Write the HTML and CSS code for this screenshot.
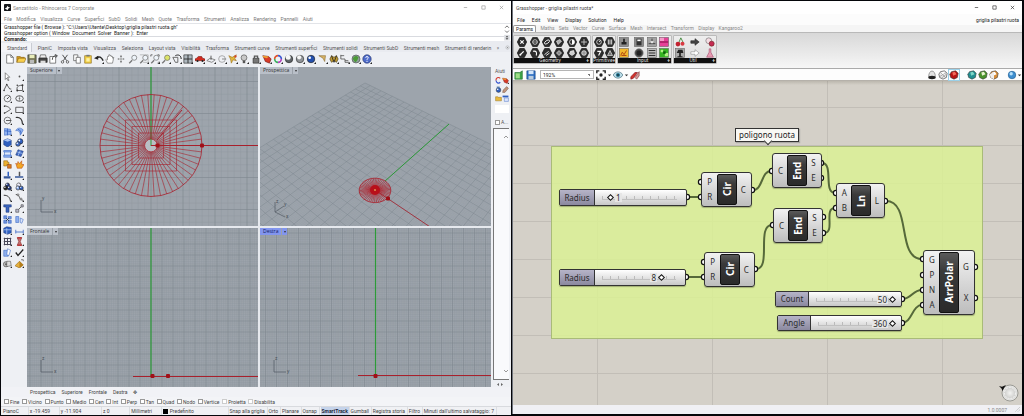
FILE: index.html
```html
<!DOCTYPE html>
<html lang="it">
<head>
<meta charset="utf-8">
<title>Rhinoceros e Grasshopper</title>
<link rel="stylesheet" href="styles.css">
</head>
<body>
<section class="window rhino">
  <header class="titlebar">
    <svg class="app-icon" viewBox="0 0 8 8"><rect width="8" height="8" rx="1" fill="#16181c"/><path d="M1 5l2-1 1-2 1 1.500 2 .5-2 1-1 2-1.500-1z" fill="#fff"/></svg>
    <span class="title">Senzatitolo - Rhinoceros 7 Corporate</span>
    <div class="controls" data-controls></div>
  </header>
  <nav class="menu">
    <button>File</button><button>Modifica</button><button>Visualizza</button><button>Curve</button><button>Superfici</button><button>SubD</button><button>Solidi</button><button>Mesh</button><button>Quote</button><button>Trasforma</button><button>Strumenti</button><button>Analizza</button><button>Rendering</button><button>Pannelli</button><button>Aiuti</button>
  </nav>
  <div class="command">
    <div class="command-text">
      <p>Grasshopper file ( Browse ): "C:\Users\Utente\Desktop\griglia pilastri ruota.gh"</p>
      <p>Grasshopper option ( Window&nbsp; Document&nbsp; Solver&nbsp; Banner ):&nbsp; Enter</p>
      <div class="prompt"><label for="cmd">Comando:</label><input id="cmd" type="text"></div>
    </div>
    <svg class="command-scroll" viewBox="0 0 6 18"><path d="M1 4l2-2 2 2M1 7l2 2 2-2" fill="none" stroke="#444" stroke-width=".8"/><rect y="11.500" width="6" height="6" fill="#dcdee2"/><path d="M1.500 14l1.500-1.500 1.500 1.500zM1.500 15.200l1.500 1.500 1.500-1.500z" fill="#444"/></svg>
  </div>
  <nav class="tabs">
    <button class="active">Standard</button><button>PianiC</button><button>Imposta vista</button><button>Visualizza</button><button>Seleziona</button><button>Layout vista</button><button>Visibilità</button><button>Trasforma</button><button>Strumenti curve</button><button>Strumenti superfici</button><button>Strumenti solidi</button><button>Strumenti SubD</button><button>Strumenti mesh</button><button>Strumenti di renderin</button><button aria-label="Altre schede">»</button><button aria-label="Opzioni" data-icons="gear"></button>
  </nav>
  <div class="toolbar" data-tools="new open save print export cut copy paste undo hand orbit zoom zoomwin zoomext zoomsel rotview quad car cplane circle plug bulb lock layers wheel sphereW sphereG sphereB cone net dims earth help"></div>
  <div class="work">
    <aside class="palette" data-tools="pointer point poly rectpts circ ellipse arc rect circ2 curve surf surf2 box spheres cyl sheet puzzle burst trim split darkballs balls fillet blend text array blocks mirror cage dim grid3 hourglass copyb check roll pyramid"></aside>
    <main class="viewports">
      <article class="viewport"><svg id="top" viewBox="27 67 231 159" preserveAspectRatio="xMidYMid slice"></svg><button class="view-label">Superiore<i></i></button></article>
      <article class="viewport"><svg id="persp" viewBox="260 67 231 159" preserveAspectRatio="xMidYMid slice"></svg><button class="view-label">Prospettica<i></i></button></article>
      <article class="viewport"><svg id="front" viewBox="27 228 231 159" preserveAspectRatio="xMidYMid slice"></svg><button class="view-label">Frontale<i></i></button></article>
      <article class="viewport"><svg id="right" viewBox="260 228 231 159" preserveAspectRatio="xMidYMid slice"></svg><button class="view-label current">Destra<i></i></button></article>
    </main>
    <aside class="panel">
      <h2>Aiuti</h2>
      <div class="panel-icons" data-tools="wheelC layers ballB brush folder docs"></div>
      <input type="text" aria-label="Cerca">
      <label class="auto"><input type="checkbox">A...</label>
      <div class="scroller"><svg viewBox="0 0 6 4"><path d="M1 3l2-2 2 2"/></svg><svg viewBox="0 0 6 4"><path d="M1 1l2 2 2-2"/></svg></div>
      <svg class="hscroll" viewBox="0 0 12 5"><path d="M4 1v3L2 2.500zM6 1v3l2-1.500z" fill="#666"/></svg>
    </aside>
  </div>
  <nav class="view-tabs"><button>Prospettica</button><button>Superiore</button><button>Frontale</button><button>Destra</button><button aria-label="Nuova vista">✥</button></nav>
  <form class="snaps">
    <label><input type="checkbox">Fine</label><label><input type="checkbox">Vicino</label><label><input type="checkbox">Punto</label><label><input type="checkbox">Medio</label><label><input type="checkbox">Cen</label><label><input type="checkbox">Int</label><label><input type="checkbox">Perp</label><label><input type="checkbox">Tan</label><label><input type="checkbox">Quad</label><label><input type="checkbox">Nodo</label><label><input type="checkbox">Vertice</label><label class="soft"><input type="checkbox">Proietta</label><label class="soft"><input type="checkbox">Disabilita</label>
  </form>
  <footer class="status">
    <span>PianoC</span><span>x -19.459</span><span class="wide">y -11.904</span><span class="wide">z 0</span><span>Millimetri</span><span class="layer"><i></i>Predefinito</span><button>Snap alla griglia</button><button>Orto</button><button>Planare</button><button>Osnap</button><button class="on">SmartTrack</button><button>Gumball</button><button>Registra storia</button><button>Filtro</button><span>Minuti dall'ultimo salvataggio: 7</span>
  </footer>
</section>

<section class="window hopper">
  <header class="titlebar">
    <span class="title">Grasshopper - griglia pilastri ruota*</span>
    <div class="controls" data-controls></div>
  </header>
  <nav class="menu"><button>File</button><button>Edit</button><button>View</button><button>Display</button><button>Solution</button><button>Help</button><span class="doc">griglia pilastri ruota</span></nav>
  <nav class="tabs"><button class="active">Params</button><button>Maths</button><button>Sets</button><button>Vector</button><button>Curve</button><button>Surface</button><button>Mesh</button><button>Intersect</button><button>Transform</button><button>Display</button><button>Kangaroo2</button></nav>
  <div class="ribbon">
    <div class="group geometry"><div class="cells" data-tools="hx hring hcrv hbox hhalf hplus hslash hcone hpipe hdiam hgem hball"></div><h3><span>Geometry</span><b>+</b></h3></div>
    <div class="group primitive"><div class="cells" data-tools="hclock hbars hseven htri"></div><h3><span>Primitive</span><b>+</b></h3></div>
    <div class="group input"><div class="cells" data-tools="toggle panelw slid swatchP graph knob list swatchG"></div><h3><span>Input</span><b>+</b></h3></div>
    <div class="group util"><div class="cells" data-tools="cherry arrowD gems tree arrowL flask"></div><h3><span>Util</span><b>+</b></h3></div>
  </div>
  <div class="canvas-bar">
    <div class="left-tools" data-tools="ghopen ghsave"></div>
    <select aria-label="Zoom"><option>192%</option></select>
    <div class="mid-tools" data-tools="target caret eye caret sketch"></div>
    <div class="right-tools" data-tools="hat mesh0 gemR"></div>
    <div class="right-tools" data-tools="gemT gemG gemO"></div>
    <div class="right-tools end" data-tools="gemB caret"></div>
  </div>
  <div class="canvas">
    <div class="gh-group"></div>
    <svg class="wires" width="510" height="324" viewBox="513 81 510 324" id="wires"></svg>
    <div class="note">poligono ruota</div>
    <div class="slider s1"><label for="r1">Radius</label><div class="track"><input id="r1" type="range" min="0" max="100" value="12"><output>1</output></div></div>
    <div class="slider s2"><label for="r2">Radius</label><div class="track"><input id="r2" type="range" min="0" max="100" value="80"><output>8</output></div></div>
    <div class="slider s3"><label for="r3">Count</label><div class="track"><input id="r3" type="range" min="0" max="100" value="100"><output>50</output></div></div>
    <div class="slider s4"><label for="r4">Angle</label><div class="track"><input id="r4" type="range" min="0" max="100" value="100"><output>360</output></div></div>
    <div class="node cir1"><div><span>P</span><span>R</span></div><strong>Cir</strong><div><span>C</span></div></div>
    <div class="node cir2"><div><span>P</span><span>R</span></div><strong>Cir</strong><div><span>C</span></div></div>
    <div class="node end1"><div><span>C</span></div><strong>End</strong><div><span>S</span><span>E</span></div></div>
    <div class="node end2"><div><span>C</span></div><strong>End</strong><div><span>S</span><span>E</span></div></div>
    <div class="node ln"><div><span>A</span><span>B</span></div><strong>Ln</strong><div><span>L</span></div></div>
    <div class="node arr"><div><span>G</span><span>P</span><span>N</span><span>A</span></div><strong>ArrPolar</strong><div><span>G</span><span>X</span></div></div>
    <svg class="compass" viewBox="0 0 20 18"><defs><radialGradient id="cg"><stop offset="0" stop-color="#f4f4f2"/><stop offset=".65" stop-color="#d0d0ce"/><stop offset="1" stop-color="#f2f2f0"/></radialGradient></defs><circle cx="11" cy="9" r="8" fill="url(#cg)" stroke="#85857f" stroke-width=".8"/><circle cx="11" cy="9" r="5.500" fill="none" stroke="#fff" stroke-width=".7" stroke-dasharray="2 1"/><path d="M0 2l3 .8L7 1 5 4 3.500 7 2.500 4.500z" fill="#111"/></svg>
  </div>
  <footer class="gh-status"><span>1.0.0007</span><svg viewBox="0 0 5 5"><path d="M5 0L0 5M5 2.500L2.500 5" stroke="#aaa" stroke-width=".7" stroke-dasharray="1 .6"/></svg></footer>
</section>
<script src="app.js"></script>
</body>
</html>
```
FILE: styles.css
```css
* { box-sizing: border-box; }
body {
  margin: 0;
  padding: 1px 2px 1px 1px;
  height: 100vh;
  background: #05060a;
  display: grid;
  grid-template-columns: 1fr 1fr;
  gap: 1px;
  font-family: Roboto, "Liberation Sans", sans-serif;
  font-size: 5px;
  line-height: 6px;
  color: #555;
}
button, input, select, output { font: inherit; color: inherit; margin: 0; }
button { border: 0; padding: 0; background: none; white-space: nowrap; }
p, h2, h3 { margin: 0; font-size: inherit; font-weight: normal; }
svg { display: block; }
.window { display: flex; flex-direction: column; min-width: 0; overflow: hidden; background: #fff; }

.titlebar { height: 13px; flex: none; display: flex; align-items: center; gap: 2px; padding-left: 3px; }
.app-icon { width: 7px; height: 7px; }
.title { white-space: nowrap; color: #858585; }
.controls { margin-left: auto; display: flex; gap: 13px; padding-right: 7px; }
.controls svg { width: 5px; height: 5px; }
.menu { display: flex; align-items: center; flex: none; }
.tabs { display: flex; flex: none; }
[data-tools] button { display: grid; place-items: center; min-width: 0; }

/* modelling window */
.rhino .menu { height: 9px; padding: 0 198px 0 3px; justify-content: space-between; color: #777; }
.command { flex: none; display: flex; border-top: 1px solid #e2e4e8; height: 18px; color: #222; }
.command-text { flex: 1; padding-left: 3px; white-space: nowrap; }
.command-text p { height: 6px; }
.prompt { display: flex; height: 5px; line-height: 5px; font-weight: bold; border-top: 1px solid #d9dbe0; }
.prompt input { flex: 1; border: 0; padding: 0; height: 4px; outline: 0; background: none; }
.command-scroll { width: 6px; height: 17px; margin-right: 1px; }
.rhino .tabs { height: 11px; padding: 2px 1px 0 0; background: #e9ebf0; justify-content: space-between; align-items: stretch; color: #555; }
.rhino .tabs .active { background: #f3f4f8; padding: 0 4px 0 6px; border-right: 1px solid #c9ccd3; }
.rhino .tabs svg { width: 5px; height: 5px; }
.toolbar { flex: none; height: 15px; padding: 0 138px 2px 3px; background: #eef0f4; display: grid; grid-auto-flow: column; grid-auto-columns: 1fr; }
.toolbar svg { width: 10px; height: 10px; }
.work { flex: 1; min-height: 0; display: flex; background: #eef0f4; }
.palette { flex: none; width: 26px; padding: 4px 2px 0 0; display: grid; grid-template-columns: 1fr 1fr; grid-auto-rows: 11px; align-content: start; }
.palette svg { width: 9px; height: 9px; }
.viewports { flex: 1; min-width: 0; display: grid; grid-template-columns: 1fr 1fr; grid-template-rows: 1fr 1fr; gap: 2px; background: #e6e9ee; }
.viewport { position: relative; min-width: 0; min-height: 0; overflow: hidden; background: #9da4ac; }
.viewport > svg { width: 100%; height: 100%; }
.view-label { position: absolute; left: 0; top: 0; height: 7px; padding-left: 3px; background: #b9bfc8; color: #333; display: flex; align-items: center; gap: 3px; line-height: 7px; font-family: "Open Sans", sans-serif; }
.view-label i { height: 7px; width: 6px; border-left: 1px solid #9ba2aa; display: grid; place-items: center; }
.view-label i::before { content: ""; border: 1px solid transparent; border-top: 2px solid #333; border-bottom: 0; }
.view-label.current { background: #8295ee; color: #101a60; }
.panel { flex: none; width: 20px; padding: 1px 2px 0 4px; display: flex; flex-direction: column; gap: 2px; }
.panel-icons { display: grid; grid-template-columns: 1fr 1fr; grid-auto-rows: 9px; }
.panel-icons svg { width: 7px; height: 7px; }
.panel > input { width: 100%; height: 8px; border: 0; padding: 0; background: #fff; }
.auto { display: flex; align-items: center; gap: 1px; margin-top: 4px; }
input[type=checkbox] { appearance: none; width: 5px; height: 5px; flex: none; border: 1px solid #999; background: #fff; }
.scroller { flex: 1; margin: 1px 0 0 -2px; background: #f9fafc; border: 1px solid #777; border-right: 0; display: flex; flex-direction: column; justify-content: space-between; align-items: flex-end; padding: 6px 0; }
.scroller svg { width: 6px; height: 4px; fill: none; stroke: #999; }
.hscroll { width: 12px; height: 5px; }
.view-tabs { flex: none; height: 10px; padding-left: 29px; display: flex; align-items: center; gap: 6px; background: #f1f2f6; color: #444; }
.snaps { flex: none; height: 9px; padding: 0 236px 0 3px; display: flex; align-items: center; justify-content: space-between; background: #f3f4f7; color: #444; }
.snaps label { display: flex; align-items: center; gap: 1px; }
.snaps .soft input { border-color: #ccc; }
.status { flex: none; height: 9px; padding: 0 14px 0 2px; display: flex; align-items: stretch; justify-content: space-between; background: #f0f1f4; border-top: 1px solid #d8dade; color: #444; line-height: 8px; white-space: nowrap; }
.status > * { border-right: 1px solid #dcdee2; padding: 0 2px 0 0; }
.status > :nth-child(-n+5) { padding-right: 9px; }
.status > .wide { padding-right: 20px; }
.status .on { background: #c5d3ea; color: #1c2740; font-weight: bold; padding: 0 1px; }
.layer { display: flex; align-items: center; gap: 2px; }
.status .layer { padding-right: 34px; }
.layer i { width: 5px; height: 5px; background: #000; }

/* node editor window */
.hopper { border-left: 1px solid #70747c; margin-bottom: 1px; }
.hopper .title { color: #444; }
.hopper .menu { height: 11px; gap: 7px; padding: 0 3px 0 4px; color: #222; background: #fcfcfc; }
.doc { margin-left: auto; }
.hopper .tabs { height: 8px; padding: 0 279px 0 0; justify-content: space-between; background: #f5f5f5; color: #888; border-bottom: 1px solid #b9b9b9; line-height: 7px; }
.hopper .tabs .active { background: #fff; color: #222; border: 1px solid #999; border-bottom: 0; padding: 0 2px; line-height: 6px; border-radius: 2px 2px 0 0; }
.ribbon { flex: none; height: 36px; padding: 2px 0 4px; display: flex; gap: 1px; background: linear-gradient(#d8d8d8, #f6f6f6); border-bottom: 1px solid #aaa; }
.group { display: flex; flex-direction: column; border: 1px solid #bbb; background: linear-gradient(#eee, #dcdcdc); border-radius: 1px; }
.group h3 { height: 5px; line-height: 5px; background: #111; color: #ddd; display: flex; padding-right: 1px; }
.group h3 span { flex: 1; text-align: center; }
.cells { flex: 1; display: grid; grid-template-rows: 1fr 1fr; }
.cells svg { width: 10px; height: 10px; }
.geometry { width: 78px; }
.geometry .cells { grid-template-columns: 15px 12px 11px 14px 12px 12px; }
.primitive { width: 24px; }
.primitive .cells { grid-template-columns: 1fr 1fr; }
.input { width: 55px; }
.input .cells { grid-template-columns: 12px 17px 9px 16px; }
.util { width: 44px; }
.util .cells { grid-template-columns: 12px 17px 13px; }
.canvas-bar { flex: none; height: 12px; display: flex; align-items: center; background: #fdfdfd; border-bottom: 1px solid #b5b1aa; }
.canvas-bar [data-tools] { display: flex; align-items: center; }
.canvas-bar svg { width: 10px; height: 10px; }
.left-tools { gap: 2px; padding-left: 1px; }
.canvas-bar select { appearance: none; width: 54px; height: 9px; margin: 0 2px 0 4px; padding: 0 2px; border: 1px solid #b5b5b5; background: linear-gradient(45deg, transparent 50%, #777 50%) 47px 3px / 2px 2px no-repeat, #fff; border-radius: 0; color: #222; line-height: 6px; }
.mid-tools { margin-right: auto; gap: 1px; }
.canvas-bar .i-caret svg { width: 5px; }
.right-tools { gap: 1px; padding-right: 8px; }
.right-tools.end { gap: 0; padding-right: 0; }
.i-gemR { outline: 1px solid #9ad0e8; }
.canvas {
  flex: 1; position: relative; overflow: hidden;
  background:
    linear-gradient(rgba(90, 85, 70, .2), transparent 4px),
    repeating-linear-gradient(90deg, transparent 0 84px, #c2beb7 84px 85px, transparent 85px 115px),
    repeating-linear-gradient(transparent 0 26px, #c2beb7 26px 27px, transparent 27px 38px),
    #d4d0c8;
}
.gh-group { position: absolute; left: 38px; top: 65px; width: 432px; height: 193px; background: rgba(219, 242, 148, .83); border: 1px solid #a9bb78; }
.wires { position: absolute; left: 0; top: 0; }
.note { position: absolute; left: 222px; top: 47px; height: 14px; padding: 0 3px; border: 1px solid #333; background: #f8f8f4; color: #222; font: 8px/11px "Noto Sans", sans-serif; white-space: nowrap; box-shadow: 1px 1px 1px #8888; }
.note::after { content: ""; position: absolute; left: 29px; top: 9px; width: 5px; height: 5px; background: #f8f8f4; border: solid #333; border-width: 0 1px 1px 0; transform: rotate(45deg); }
.slider { position: absolute; width: 127px; height: 17px; display: flex; border: 1px solid #333; border-radius: 2px; overflow: hidden; background: linear-gradient(#fff, #c8c8c8); color: #2b2b2b; font: 8px/15px "Noto Sans", sans-serif; box-shadow: 0 1px 1px #0004; }
.slider label { width: 35px; text-align: center; border-right: 1px solid #333; background: linear-gradient(#b6b4c8, #8b899f); }
.track { flex: 1; position: relative; display: flex; align-items: center; padding: 0 6px 0 4px; }
.track input { appearance: none; width: 100%; height: 9px; background: linear-gradient(#c0c0c0, #c0c0c0), repeating-linear-gradient(90deg, #bbb 0 1px, transparent 1px 8px); background-size: calc(100% - 6px) 1px, calc(100% - 6px) 4px; background-position: 3px 6px, 3px 3px; background-repeat: no-repeat; }
.track input::-webkit-slider-thumb { appearance: none; width: 5px; height: 5px; border: 1px solid #111; background: #fff; transform: rotate(45deg); }
.track output { position: absolute; padding: 0 1px; background: #e6e6e6; line-height: 9px; }
.s1 { left: 46px; top: 108px; width: 128px; }
.s1 output { left: 20px; }
.s2 { left: 46px; top: 188px; }
.s2 output { right: 28px; }
.s3 { left: 262px; top: 210px; height: 16px; line-height: 14px; }
.s3 label, .s4 label { width: 33px; }
.s3 output, .s4 output { right: 13px; }
.s4 { left: 264px; top: 234px; width: 125px; height: 16px; line-height: 14px; }
.node { position: absolute; width: 51px; height: 35px; display: grid; grid-template-columns: 1fr 20px 1fr; padding: 1px; border: 1px solid #333; border-radius: 3px; background: linear-gradient(#f2f2f2, #bdbdbd); color: #2b2b2b; font: 8px/10px "Noto Sans", sans-serif; box-shadow: 0 1px 1px #0004; }
.node > div { display: flex; flex-direction: column; justify-content: space-around; align-items: center; }
.node strong { display: grid; place-items: center; writing-mode: vertical-rl; transform: rotate(180deg); border: 1px solid #111; border-radius: 2px; background: linear-gradient(0deg, #5a5a5a, #3a3a3a 30%, #2a2a2a); color: #fff; font-size: 10px; line-height: 18px; }
.cir1 { left: 188px; top: 91px; }
.cir2 { left: 191px; top: 171px; }
.end1 { left: 259px; top: 72px; width: 50px; }
.end2 { left: 260px; top: 127px; width: 50px; }
.ln { left: 323px; top: 102px; width: 49px; }
.arr { left: 410px; top: 169px; width: 52px; height: 65px; }
.compass { position: absolute; right: 3px; bottom: 3px; width: 20px; height: 18px; }
.gh-status { flex: none; height: 9px; padding-right: 2px; display: flex; align-items: center; justify-content: flex-end; gap: 8px; background: #f0f0f4; color: #888; }
.gh-status svg { width: 5px; height: 5px; }
```
FILE: app.js
```js
const K = '#333', B = '#2f5fc0', L = '#8fb0ee', G = '#888';
const line = (d, c = K, w = 1) => `<path d="${d}" fill="none" stroke="${c}" stroke-width="${w}"/>`;
const fill = (d, c, s = 'none') => `<path d="${d}" fill="${c}" stroke="${s}" stroke-width=".7"/>`;
const disc = (x, y, r, c, s = 'none', w = .8) => `<circle cx="${x}" cy="${y}" r="${r}" fill="${c}" stroke="${s}" stroke-width="${w}"/>`;
const ball = (x, y, r, c) => disc(x, y, r, c, '#222') + disc(x - r * .35, y - r * .35, r * .35, '#fff');
const corner = fill('M12 9.500V12H9.500z', '#222');
const hex = g => fill('M3.200 .6h5.600L11.600 6 8.800 11.400H3.200L.4 6z', '#2d2d2d', '#000') + g;
const key = (c, g) => `<rect x=".5" y=".5" width="11" height="11" fill="${c}" stroke="#666" stroke-width=".7"/>` + g;
const W = '#fff';
const gem = (a, b) => fill('M3 2l5-1 3 3-1 5-4 2-4-2-1-4z', a, '#333') + fill('M4 3l3-1 2 3-4 2z', b);
const lens = line('M5 7.500L1.500 11', '#777', 1.6) + disc(7.5, 4.5, 3, '#eef4fa', '#666');

const icons = {
  new: fill('M2 1h5l3 3v7H2z', '#fff', K) + line('M7 1v3h3', K, .7),
  open: fill('M1 10V3h4l1 1h4v2', '#d89a20', '#84600c') + fill('M1 10l2-5h9l-2 5z', '#f8cf4c', '#84600c'),
  save: fill('M1 1h10v10H1z', '#737352', '#333') + fill('M3 1h6v4H3z', '#e8edba') + fill('M3.500 7h5v4h-5z', '#bbb'),
  print: fill('M3 1h6l1 4H2z', '#eee', K) + fill('M1 5h10v5H1z', '#454545', '#111') + fill('M3 8h6v3H3z', '#ddd'),
  export: fill('M1 3h7v8H1z', '#fff', K) + line('M4 7c0-4 2-5 5-5M7 .5L10 2 8 4.500'),
  cut: line('M3 1l5 7M9 1L4 8') + disc(3, 9.5, 1.5, 'none', K) + disc(9, 9.5, 1.5, 'none', K),
  copy: fill('M2 1h5v7H2z', '#fff', K) + fill('M5 4h5v7H5z', '#fff', K),
  paste: fill('M2 2h8v9H2z', '#f1cf46', '#876414') + fill('M4 1h4v2H4z', '#777') + fill('M4 5h4v4H4z', '#fff2a4'),
  undo: line('M3 5c3-3 6-1 8 3', '#222', 1.7) + fill('M0 5l5-3v5z', '#222') + corner,
  hand: fill('M3 11L1 7l1-1 1 1V3h1.500V1H6v1h1.500v1H9v2l1.500-1L9 11z', '#fff', '#555'),
  orbit: line('M6 2v8M3 6h6', '#888', .8) + fill('M5 3.500L6 1l1 2.500zM5 8.500L6 11l1-2.500zM3.500 5L1.500 6l2 1zM8.500 5l2 1-2 1z', '#666'),
  zoom: lens, zoomwin: lens + line('M1 1h10v9H5', '#999', .7) + corner,
  zoomext: lens + line('M1 3V1h2M9 1h2v2M11 9v2H9', '#555') + corner,
  zoomsel: line('M5 7.500L1.500 11', '#777', 1.6) + disc(7.5, 4.5, 3.2, '#dce469', '#666') + corner,
  rotview: line('M1 4h6v6H4z', '#555') + line('M4 2c4-2 7 0 7 4', '#222', 1.2) + corner,
  quad: fill('M1 1h10v10H1z', '#aeb8bf', '#222') + line('M6 1v10M1 6h10', '#222') + corner,
  car: fill('M0 8V6l2-1 2-2h4l1 2 3 1v2z', '#d12b20', '#741410') + disc(3, 8.5, 1.2, '#222') + disc(9, 8.5, 1.2, '#222') + corner,
  cplane: line('M1 8l4-3 6 2-4 3z', '#777') + line('M6 7V2', '#444') + corner,
  circle: disc(6, 6, 4, 'none', '#888') + line('M6 6h5', '#777') + corner,
  plug: fill('M1 2l4 2 5-3-2 4 2 3-4-1-2 4-1-5z', '#e2b73c', '#99701c') + disc(9, 3, 1.4, '#d0422c') + corner,
  bulb: disc(6, 4.5, 3.5, '#c9c9c9', '#555') + fill('M4.500 8h3v3h-3z', '#555') + corner,
  lock: line('M4 5V2.500h4V5', '#555', 1.3) + fill('M2.500 5h7v6h-7z', '#777', '#222') + corner,
  layers: fill('M1 2l7 1 3 3-2 5-5-2z', '#d83b28', '#671818') + fill('M1 2l7 1-2 2-5-1z', '#f0a336') + corner,
  wheel: line('M6 2a4 4 0 0 1 4 4', '#3d58d0', 2) + line('M10 6a4 4 0 0 1-4 4', '#b342bc', 2) + line('M6 10a4 4 0 0 1-4-4', '#3cae61', 2) + line('M2 6a4 4 0 0 1 4-4', '#e0532c', 2) + corner,
  wheelC: line('M9 2.500A4 4 0 0 0 2 6', '#d64237', 2) + line('M2 6a4 4 0 0 0 7 3', '#3656d0', 2),
  sphereW: disc(6, 6, 4.5, '#5f6468', '#222') + disc(5, 4, 3, '#f6f6f6'),
  sphereG: disc(6, 6, 4.5, '#909498', '#333') + disc(5, 4, 2.5, '#f6f6f6') + corner,
  sphereB: ball(6, 6, 4.5, '#2350ae') + corner, ballB: ball(6, 7, 4, B) + fill('M3 1h5v3H3z', '#5478aa'),
  cone: fill('M1 2h8L8 9 6 5z', '#d7b365', '#896b31') + corner,
  net: fill('M1 6l2-4 3 2 3-2 2 4-2 4-3-2-3 2z', '#bf9a32', '#3f3310') + line('M3 2l3 8M9 2L6 10', '#222') + corner,
  dims: line('M1 1v5h5v4h5M1 2h4M6 8h4', '#555') + corner,
  earth: disc(6, 6, 4.8, '#8fa19d', '#555') + fill('M2 6c2-5 5-4 7-2-1 3-2 5-4 6z', '#4c9a37') + corner,
  help: disc(6, 6, 5, '#4e6ccc', '#23346b') + line('M4.500 4.500c0-2 3-2 3 0 0 1-1.500 1-1.500 2.500M6 8.200v1.300', W, 1.2) + corner,
  gear: disc(6, 6, 4, 'none', '#888') + disc(6, 6, 1.5, '#888'),

  pointer: fill('M3 1l6 6H6l2 4-1.500.5L5 8l-2 2z', '#fff', K),
  point: disc(6, 6, 1.2, '#555') + corner,
  poly: line('M1 10l4-8 4 6 2 0') + disc(5, 2, 1, K) + disc(1.5, 10, 1, K) + corner,
  rectpts: line('M3 10c-1-4 0-7 7-7M3 10h7V3') + disc(3, 3, 1, K) + disc(10, 3, 1.2, K) + disc(3, 10, 1.2, K) + corner,
  circ: disc(6, 6, 4.5, 'none', K) + line('M6 6l3-3') + disc(6, 6, .8, K) + corner,
  ellipse: `<ellipse cx="6" cy="6" rx="5" ry="3.700" fill="none" stroke="#333"/>` + disc(6, 6, 1, K) + line('M6 2v8', G) + corner,
  arc: line('M2 1c6 1 8 4 8 5L2 11') + disc(2, 1.5, 1, K) + disc(2, 10.5, 1, K) + corner,
  rect: line('M1 3h10v7H1z') + corner,
  circ2: disc(6, 6, 4.5, 'none', K) + line('M4 6h7') + corner,
  curve: line('M1 2c6-1 9 3 9 9', K, 1.5) + corner,
  surf: fill('M2 2l8 1 1 7-9 1z', L, B) + line('M2 5l9 1M6 2v9', B) + corner,
  surf2: fill('M1 5c2-5 8-4 10-1L7 11C7 6 4 4 1 5z', L, B) + line('M4 3c3 1 4 3 4 6', B) + corner,
  box: fill('M1 3l5-2 5 2v6l-5 3-5-3z', B, '#1c3674') + fill('M1 3l5-2 5 2-5 2z', '#a8c3f5') + corner,
  spheres: ball(7, 4.5, 3.5, B) + ball(4, 8, 3, '#4772cb') + corner,
  cyl: fill('M2 3h8v6H2z', '#e0e9fa', B) + fill('M1 2h10v2H1zM1 8h10v3H1z', L, B) + corner,
  sheet: fill('M4 1l7 2-3 7-7-2z', '#3e68c2', '#1c3674') + line('M3 4l7 2M7 2L4 9', '#b6cdf5') + corner,
  puzzle: fill('M1 1h5v2h2v3H5v2H1z', '#edb12f', '#8a5d10') + fill('M6 6h5v5H6z', '#d9781e', '#8a3d10'),
  burst: fill('M1 4l2 2 1-4 2 3 3-4v5h3l-3 5H3z', '#f2a724', '#b84512'),
  trim: line('M7 1v6', B, 2) + fill('M1 7h9v3H1z', '#36579a') + corner,
  split: line('M6 1v6', '#555', 2) + fill('M0 7h11v2H0z', '#36579a') + corner,
  darkballs: ball(6, 4, 2.7, '#243a80') + ball(3.5, 8, 2.7, '#222') + ball(8.5, 8, 2.7, '#243a80') + corner,
  balls: ball(5, 4, 2.7, '#dde') + ball(4, 8, 2.7, L) + ball(8.5, 8, 2.5, B) + corner,
  fillet: line('M1 3c5 0 8 2 9 8', K, 1.3) + corner,
  blend: line('M1 2c3 0 4 1 5 4s3 3 5 4') + disc(4, 2.5, 1.3, '#fff', K) + disc(8, 8, 1.3, '#fff', K) + corner,
  text: fill('M1 1h10v3H8v7H4V4H1z', '#3a64be', '#1c3674') + corner,
  array: fill('M1 7h4v4H1zM8 1h3v3H8z', '#bbc', K) + line('M5 7l3-3') + corner,
  blocks: fill('M1 1h4v4H1zM7 2h4v3H7zM1 7h4v4H1zM7 7h4v4H7z', '#6f91dc', B) + line('M4 4l4 4M8 4L4 8', '#234'),
  mirror: fill('M1 2h4v8H1z', L, B) + fill('M7 4l4 2-2 5-2-1z', '#dde6fa', B),
  cage: fill('M1 3l4-2 6 1v7l-5 2-5-2z', B, '#1c3674') + line('M1 5h10M5 3v8', '#b6cdf5') + corner,
  dim: line('M1 5v5M11 5v5M1 8h10', B) + corner,
  grid3: line('M1 2h10M1 6h10M1 10h10M2 1v10M6 1v10M10 1v10', '#445', 1.3) + corner,
  hourglass: fill('M3 1h6L7 6l2 5H3l2-5z', '#c76f6f', '#7b2020') + line('M3 1h6M3 11h6', '#b91f1f', 1.5) + corner,
  copyb: fill('M1 3h6v8H1z', L, B) + fill('M6 1l4 2-2 7-3-1z', '#fff', B) + corner,
  check: line('M1 6l3 4 7-8', '#222', 1.7) + corner,
  roll: disc(4, 7, 3.5, '#bbb', '#444') + fill('M5 3h5l1 6-6 1z', '#ddd', '#444') + disc(4, 7, 1.2, '#555') + corner,
  pyramid: fill('M0 9l6-6 5 5-5 4z', '#e5b03c', '#825b12') + fill('M6 3l5 5-5 4z', '#b47d1b') + line('M8 1h3v2', '#555') + corner,
  brush: fill('M8 1l3 3-6 7-4 0 1-4z', '#c0947c', '#5e4030'), folder: fill('M1 3h4l1 1h5v6H1z', '#e9b93d', '#84600c'),
  docs: fill('M1 1h10v3H1z', B) + fill('M4 5h7v6H4z', '#dbe4fa', B),

  hx: hex(line('M4 4l4 4M8 4L4 8', W, 1.4)), hring: hex(disc(6, 6, 2.8, 'none', W) + line('M3 6h6', W, .6)),
  hcrv: hex(`<ellipse cx="6" cy="6" rx="3.500" ry="1.700" fill="none" stroke="#fff" transform="rotate(-35 6 6)"/>`),
  hbox: hex(fill('M3 5l4-2 2 2-4 4z', '#aaa', W)), hhalf: hex(disc(6, 6, 3, 'none', W) + fill('M6 3a3 3 0 0 1 0 6z', W)),
  hplus: hex(line('M6 2.500v7M2.500 6h7', '#bbb', 1.2)), hslash: hex(line('M4 8l4-4', W, 1.5) + disc(4, 8, 1.2, W)),
  hcone: hex(line('M3.500 4c4-1 5 1 4 5', W, 1.3)), hpipe: hex(line('M3 8l5-4M5 9l4-3', W)),
  hdiam: hex(fill('M6 3l3 3-3 3-3-3z', '#888', W)), hgem: hex(fill('M4 4l4-1 1 4-3 2-3-2z', '#ccc', W)), hball: hex(disc(6, 6, 2.8, '#999', W)),
  hclock: hex(disc(6, 6, 2.8, 'none', W) + line('M6 6l2-2', W)), hbars: hex(line('M4 3v6M6 3v6M8 3v6', W)),
  hseven: hex(line('M4 4h4L5.500 9', W, 1.3)), htri: hex(fill('M6 3l3 6H3z', '#777', W)),
  toggle: key('#8f8f8f', fill('M5 2h2v4h2v3H3V6h2z', '#222')), graph: key('#f2b72c', line('M2 9l2-4 2 3 3-5M3 9h6', '#b44b12', 1.2)),
  panelw: key('#8a8a8a', fill('M3 2h6v8H3z', '#333') + fill('M4 3h4v2H4z', W)), knob: disc(6, 6, 5, '#444', '#777') + disc(6, 6, 3, '#222'),
  slid: key('#a2a2a2', line('M2 8h8M6 2v5', '#333') + fill('M4 5h4L6 8z', W)), list: key('#bbb', line('M2 3h8M2 6h8M2 9h8', '#333', 1.3)),
  swatchP: key('#e54298', fill('M1 1h5v4H1z', '#f49ac8') + line('M1 6h10', '#aa1f64', 2)), swatchG: key('#35b321', fill('M2 2h3v3H2zM7 6h4v4H7z', '#b1f083') + fill('M5 4h3v3H5z', '#0c5e0a')),
  cherry: line('M4 8l3-7 3 6', '#34812c') + disc(3.5, 8.5, 2.8, '#c22330') + disc(9, 8, 2.4, '#d83a42'),
  tree: key('#aaa', fill('M2 6l2-4h5l1 4zM5 6h2v4h2v1H3v-1h2z', '#222')),
  arrowD: fill('M1 4.500h5V2l5 4-5 4V7.500H1z', '#444', '#222'), arrowL: fill('M1 4.500h5V2l5 4-5 4V7.500H1z', '#fff', '#888'),
  gems: disc(4.5, 4.5, 3.5, '#f4dde4', '#777') + disc(8, 8, 3, '#c42b53', '#722'), flask: fill('M5 1h2v4l3 6H2l3-6z', '#e89cb2', '#a4466a'),

  ghopen: fill('M1 3h6l3-2v10H1z', '#3da34a', '#1f6a2a') + fill('M2 4h5v6H2z', '#9ede86'),
  ghsave: fill('M1 1h10v10H1z', '#2e6fc2', '#153f80') + fill('M3 1h6v4H3z', '#d5e6fa') + fill('M3 7h6v4H3z', '#bcd'),
  target: line('M1 4V1h3M8 1h3v3M11 8v3H8M4 11H1V8', '#222', 1.7) + disc(6, 6, 2, '#222'),
  caret: fill('M2 5h8L6 9z', '#333'),
  eye: fill('M0 6c3-5 9-5 12 0-3 5-9 5-12 0z', '#b9dbe6', '#225163') + disc(6, 6, 2.5, '#23728f') + disc(6, 6, 1, '#111'),
  sketch: fill('M1 8l5-5 3 0-5 7-3 1z', '#d2352c', '#701') + fill('M6 9l5-7v5l-3 4z', '#d99', '#733'),
  hat: fill('M2 8c0-9 8-9 8 0z', '#e2e2e2', '#666') + `<ellipse cx="6" cy="9" rx="4.500" ry="2" fill="#222"/>`,
  mesh0: gem('#e8e8e8', '#fff') + line('M2 8l8-5M4 10l6-5M3 3l6 6', '#777', .6), gemR: gem('#b81414', '#f06a5a'),
  gemT: gem('#218f91', '#7fd6c8'), gemG: gem('#49912c', '#e8f2d0'), gemO: gem('#d68c37', '#fff') + fill('M6 2v9l-4-2-1-4z', '#eee'), gemB: disc(6, 6, 4.5, '#3e8fd0', '#1f5d94') + disc(5, 4.5, 2, '#b6e0fa')
};
const draw = n => `<svg viewBox="0 0 12 12" aria-hidden="true">${icons[n] || ''}</svg>`;
document.querySelectorAll('[data-tools]').forEach(el => {
  el.innerHTML = el.dataset.tools.split(' ').map(n => `<button class="i-${n}" aria-label="${n}">${draw(n)}</button>`).join('');
});
document.querySelectorAll('[data-icons]').forEach(el => { el.innerHTML = draw(el.dataset.icons); });
document.querySelectorAll('[data-controls]').forEach(el => {
  const c = el.closest('.rhino') ? '#999' : '#333';
  el.innerHTML = ['M1 3h4', 'M1 1h4v4H1z', 'M1 1l4 4M5 1L1 5'].map((d, i) =>
    `<button aria-label="${['Riduci', 'Ingrandisci', 'Chiudi'][i]}"><svg viewBox="0 0 6 6">${line(d, c, .8)}</svg></button>`).join('');
});

/* orthographic and perspective views */
const MIN = '#8f979f', MAJ = '#7d868e', RED = '#a8202c', GREEN = '#2c9a38';
function grid(x, y, w, h, ox, oy, step) {
  let a = '', b = '';
  for (let i = Math.ceil((x - ox) / step); ox + i * step < x + w; i++) { const s = `M${ox + i * step} ${y}v${h}`; i % 5 ? a += s : b += s; }
  for (let i = Math.ceil((y - oy) / step); oy + i * step < y + h; i++) { const s = `M${x} ${oy + i * step}h${w}`; i % 5 ? a += s : b += s; }
  return line(a, MIN, .4) + line(b, MAJ, .6);
}
const tag = (x, y, t) => `<text x="${x}" y="${y}" font-size="5" fill="#4a525b">${t}</text>`;
const axes = (x, y, a, b) => line(`M${x} ${y - 12}v12h12`, '#59616a', .8) + tag(x + 13, y + 1, a) + tag(x + 1, y - 12, b);
const mark = (x, y) => `<rect x="${x - 2}" y="${y - 2}" width="4" height="4" rx="1" fill="#a01018"/>`;

let spokes = '', squares = '';
const cx = 151, cy = 145.5;
for (let i = 0; i < 50; i++) {
  const t = i * Math.PI / 25, c = Math.cos(t), s = Math.sin(t);
  spokes += `M${cx + 6.4 * c} ${cy - 6.4 * s}L${cx + 51 * c} ${cy - 51 * s}`;
}
for (const r of [25.5, 19, 12.5]) squares += `M${cx - r} ${cy - r}h${2 * r}v${2 * r}h${-2 * r}z`;
document.getElementById('top').innerHTML = grid(27, 67, 231, 159, cx, cy, 6.4) + line('M151 67V140', GREEN, 1.2) +
  line(spokes, RED, .6) + line(squares, RED, .6) + disc(cx, cy, 51, 'none', RED, .8) + disc(cx, cy, 6.4, '#b9bec4', RED, .8) +
  line('M151 139v7', GREEN) + line('M151 145.500H258', RED, 1.2) + line('M157 140l25-30', RED, 1) + mark(157.5, cy) + mark(202, cy) + axes(41, 212, 'x', 'y');

/* ground plane: a homography through four known plane points, half-width HALF units */
const HALF = 70;
const P = [[287, 131], [375, 190], [449, 124], [365, 83]];
const sx = P[0][0] - P[1][0] + P[2][0] - P[3][0], sy = P[0][1] - P[1][1] + P[2][1] - P[3][1];
const d1 = [P[1][0] - P[2][0], P[1][1] - P[2][1]], d2 = [P[3][0] - P[2][0], P[3][1] - P[2][1]];
const det = d1[0] * d2[1] - d1[1] * d2[0];
const g = (sx * d2[1] - sy * d2[0]) / det, h = (d1[0] * sy - d1[1] * sx) / det;
function project(x, y) {
  const u = x / HALF + 1, v = y / HALF, w = g * u + h * v + 1;
  return [0, 1].map(k => (((P[1][k] - P[0][k] + g * P[1][k]) * u + (P[3][k] - P[0][k] + h * P[3][k]) * v + P[0][k]) / w).toFixed(2)).join(' ');
}
let pa = '', pb = '', ring = '', rays = '';
for (let i = -HALF; i <= HALF; i++) {
  const s = `M${project(i, -HALF)}L${project(i, HALF)}M${project(-HALF, i)}L${project(HALF, i)}`;
  i % 5 ? pa += s : pb += s;
}
for (let i = 0; i < 50; i++) {
  const t = i * Math.PI / 25, c = Math.cos(t), s = Math.sin(t);
  ring += (i ? 'L' : 'M') + project(8 * c, 8 * s);
  rays += `M${project(c, s)}L${project(8 * c, 8 * s)}`;
}
document.getElementById('persp').innerHTML = line(pa, '#959da5', .25) + line(pb, MAJ, .5) +
  line(`M${project(0, 8)}L${project(0, HALF)}`, GREEN) + line(`M${project(0, 0)}L${project(HALF, 0)}`, RED, .8) +
  line(ring + 'z', RED, .8) + line(rays, '#b01420', .6) + disc(375, 190, 5, '#b8101a') + disc(375, 190, 1, '#e09050') + mark(388, 198.5) +
  line('M275 212v-10M275 212l9-6M275 212l10 5', '#59616a', .8) + tag(286, 218, 'x') + tag(284, 206, 'y') + tag(276, 203, 'z');
document.getElementById('front').innerHTML = grid(27, 228, 231, 159, 151, 376, 2.2) + line('M151 228v148', GREEN, 1.2) + line('M133 376.500h125', RED) + mark(152.5, 376) + mark(168, 376) + axes(41, 372, 'x', 'z');
document.getElementById('right').innerHTML = grid(260, 228, 231, 159, 375.5, 376, 2.2) + line('M375.500 228v148', GREEN, 1.2) + line('M358 375.500h133', RED) + mark(375.5, 376) + axes(274, 372, 'y', 'z');

/* wires and connectors */
const wires = [[688, 197, 701, 197], [687, 277, 704, 277], [753, 190, 771, 171], [822, 163, 835, 193, 12], [824, 233, 835, 208, 12], [756, 269, 772, 225, 16], [886, 201, 922, 259, 26], [902, 299, 922, 290], [902, 323, 922, 305]];
const ports = [[687, 197], [686, 277], [902, 299], [902, 323], [701, 182], [701, 197], [752, 190], [704, 262], [704, 277], [755, 269], [772, 171], [821, 163], [821, 178], [773, 225], [823, 217], [823, 233], [836, 193], [836, 208], [885, 201], [923, 259], [923, 275], [923, 290], [923, 305], [975, 267], [975, 298]];
document.getElementById('wires').innerHTML =
  line(wires.map(([a, b, c, d, k = 10]) => `M${a} ${b}C${a + k} ${b} ${c - k} ${d} ${c} ${d}`).join(''), '#56693a', 2) +
  ports.map(([x, y]) => disc(x, y, 2.6, '#fff', '#111', 1.2)).join('');
```
